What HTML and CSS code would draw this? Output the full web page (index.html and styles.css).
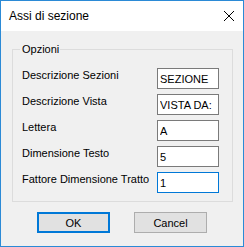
FILE: index.html
```html
<!DOCTYPE html>
<html lang="it">
<head>
<meta charset="UTF-8">
<title>Assi di sezione</title>
<link rel="stylesheet" href="styles.css">
</head>
<body>

<div class="dialog">
<div class="titlebar">
<span class="title">Assi di sezione</span>
<svg class="close" width="10" height="10" viewBox="0 0 10 10">
<path d="M0 0 L10 10 M10 0 L0 10" stroke="#000" stroke-width="1" fill="none"/>
</svg>
</div>

<div class="content">
<fieldset class="group">
<legend>Opzioni</legend>
<div class="row">
<label for="descSez">Descrizione Sezioni</label>
<input id="descSez" type="text" value="SEZIONE">
</div>
<div class="row">
<label for="descVista">Descrizione Vista</label>
<input id="descVista" type="text" value="VISTA DA:">
</div>
<div class="row">
<label for="lettera">Lettera</label>
<input id="lettera" type="text" value="A">
</div>
<div class="row">
<label for="dimTesto">Dimensione Testo</label>
<input id="dimTesto" type="text" value="5">
</div>
<div class="row">
<label for="fattore">Fattore Dimensione Tratto</label>
<input id="fattore" class="focused" type="text" value="1">
</div>
</fieldset>

<div class="buttons">
<button class="default">OK</button>
<button>Cancel</button>
</div>
</div>
</div>

</body>
</html>
```

FILE: styles.css
```css
body {
margin: 0;
font-family: "Liberation Sans", Arial, sans-serif;
font-size: 11px;
color: #000;
background-color: #f0f0f0;
}
.dialog {
width: 244px;
height: 247px;
box-sizing: border-box;
border: 1px solid #2b8ad6;
background-color: #f0f0f0;
display: flex;
flex-direction: column;
}
.titlebar {
height: 30px;
flex: none;
background-color: #fff;
display: flex;
align-items: center;
justify-content: space-between;
padding: 0 9px 0 8px;
}
.title {
font-size: 12px;
}
.close {
display: block;
}
.content {
padding: 12px 10px 0 11px;
}
.group {
margin: 0;
border: 1px solid #dcdcdc;
padding: 12px 13px 8px 9px;
display: flex;
flex-direction: column;
gap: 5px;
}
.group legend {
padding: 0 1px 0 2px;
margin-left: -2px;
line-height: 13px;
}
.row {
display: flex;
height: 21px;
}
.row label {
width: 135px;
padding-top: 1px;
line-height: 13px;
}
.row input {
width: 62px;
height: 21px;
box-sizing: border-box;
margin: 0;
border: 1px solid #7a7a7a;
padding: 0 2px;
font-family: "Liberation Sans", Arial, sans-serif;
font-size: 11px;
color: #000;
background-color: #fff;
outline: none;
}
.row input.focused {
border-color: #0078d7;
}
.buttons {
display: flex;
gap: 24px;
padding-left: 25px;
margin-top: 10px;
}
.buttons button {
width: 73px;
height: 21px;
box-sizing: border-box;
margin: 0;
padding: 0;
border: 1px solid #adadad;
background-color: #e1e1e1;
font-family: "Liberation Sans", Arial, sans-serif;
font-size: 11px;
color: #000;
}
.buttons button.default {
border: 2px solid #0078d7;
}
```
